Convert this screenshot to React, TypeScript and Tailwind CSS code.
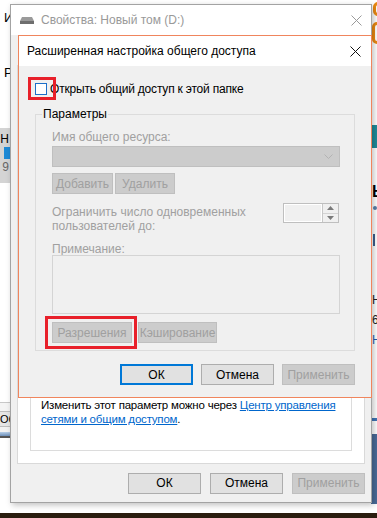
import React from 'react';

const font = "font-['Segoe_UI','Liberation_Sans',Arial,sans-serif]";

function WinButton({ label, w, disabled, primary }: { label: string; w: string; disabled?: boolean; primary?: boolean }) {
  return (
    <div
      className={[
        'h-[21px] flex items-center justify-center text-[12px] leading-none',
        w,
        disabled
          ? 'bg-[#cccccc] border border-[#bfbfbf] text-[#a0a0a0]'
          : primary
            ? 'bg-[#e1e1e1] border-2 border-[#0078d7] text-black'
            : 'bg-[#e1e1e1] border border-[#adadad] text-black',
      ].join(' ')}
    >
      {label}
    </div>
  );
}

function CloseX({ color }: { color: string }) {
  return (
    <svg width="11" height="11" viewBox="0 0 11 11">
      <path d="M0.5 0.5 L10.5 10.5 M10.5 0.5 L0.5 10.5" stroke={color} strokeWidth="1" />
    </svg>
  );
}

function Desktop() {
  return (
    <>
      {/* left strip of the window behind */}
      <div className="absolute left-[4px] top-[8px] text-[13px] text-black">И</div>
      <div className="absolute left-[4px] top-[63px] text-[13px] text-black">Р</div>
      <div className="absolute left-0 top-[128px] w-[10px] h-[55px] bg-[#d4d4d4] flex flex-col items-end pt-[4px] gap-[1px] text-[12px] leading-[14px]">
        <span className="text-black pr-[1px]">Н</span>
        <span className="w-[6px] h-[12px] bg-[#1e8ad6]" />
        <span className="text-[#666] pr-[1px]">9</span>
      </div>
      <div className="absolute left-0 top-[402px] w-[10px] h-[40px] flex flex-col">
        <div className="h-[9px] border-t border-[#c8c8c8] bg-[#f4f4f4]" />
        <div className="h-[16px] bg-[#e6e6e6] border-y border-[#bdbdbd] text-[11px] leading-[14px] text-black overflow-hidden">Обі</div>
        <div className="h-[5px] bg-[#f2f2f2]" />
        <div className="h-[4px] bg-gradient-to-b from-[#b7cfe9] to-[#6d8fb8]" />
        <div className="h-[2px] bg-[#555]" />
      </div>

      {/* right strip: wallpaper and another window */}
      <div className="absolute left-[372px] top-[0px] w-[5px] h-[60px] overflow-hidden">
        <div className="absolute left-[1px] top-[2px] w-[10px] h-[14px] rounded-full border-[3px] border-[#ec8a12]" />
        <div className="absolute left-[0px] top-[22px] w-[10px] h-[22px] rounded-full border-[3px] border-[#ec8a12]" />
      </div>
      <div className="absolute left-[372px] top-[125px] w-[5px] h-[23px] bg-[#1f8b99]" />
      <div className="absolute left-[372px] top-[184px] w-[5px] h-[18px] overflow-hidden text-[16px] leading-none font-bold text-black">Ь</div>
      <div className="absolute left-[373px] top-[206px] w-[4px] h-[4px] rounded-full bg-[#5a7fa8]" />
      <div className="absolute left-[373px] top-[234px] w-[2px] h-[12px] bg-[#3d5f8c]" />
      <div className="absolute left-[372px] top-[290px] w-[5px] overflow-hidden text-[12px] leading-[20px] text-[#222] flex flex-col">
        <span>Н</span>
        <span>6</span>
        <span className="text-[#1f5fb0]">Н</span>
      </div>
      <div className="absolute left-[371px] top-[418px] w-[6px] h-[3px] bg-[#3f74b5]" />
      <div className="absolute left-[371px] top-[434px] w-[6px] h-[70px] bg-[#4a6b98]" />

      {/* bottom dark strip */}
      <div className="absolute left-0 top-[513px] w-[377px] h-[5px] bg-[#2a1d0f]" />
    </>
  );
}

function PropertiesWindow() {
  return (
    <div className="absolute left-[10px] top-[4px] w-[362px] h-[499px] border border-[#a3a3a3] bg-[#f0f0f0] flex flex-col shadow-[2px_2px_6px_rgba(0,0,0,0.25)]">
      <div className="h-[30px] bg-white flex items-center pl-[9px] pr-[9px]">
        <svg width="14" height="8" viewBox="0 0 14 8" className="mt-[2px]">
          <path d="M2 0 H12 L14 4 V7 H0 V4 Z" fill="#9a9a9a" />
          <rect x="0" y="4" width="14" height="3" fill="#6e6e6e" />
        </svg>
        <span className="ml-[7px] text-[12px] text-[#999999]">Свойства: Новый том (D:)</span>
        <div className="ml-auto">
          <CloseX color="#9a9a9a" />
        </div>
      </div>
      <div className="flex-1 flex flex-col px-[6px] pt-[30px]">
        <div className="flex-1 bg-white border border-[#d9d9d9] px-[12px] pb-[12px] flex flex-col">
          <div className="flex-1 border border-[#dcdcdc] border-t-0 flex flex-col justify-end pl-[10px] pb-[24px] text-[11.5px] leading-[14px] text-black">
            <p className="whitespace-nowrap tracking-[-0.2px]">
              Изменить этот параметр можно через{' '}
              <span className="text-[#0066cc] underline">Центр управления</span>
              <br />
              <span className="text-[#0066cc] underline">сетями и общим доступом</span>.
            </p>
          </div>
        </div>
        <div className="h-[38px] flex items-center justify-end gap-[9px]">
          <WinButton label="ОК" w="w-[73px]" />
          <WinButton label="Отмена" w="w-[73px]" />
          <WinButton label="Применить" w="w-[73px]" disabled />
        </div>
      </div>
    </div>
  );
}

function Dialog() {
  return (
    <div className="absolute left-[18px] top-[35px] w-[354px] h-[363px] border border-[#f0855d] bg-[#f0f0f0] flex flex-col">
      <div className="h-[30px] bg-white flex items-center pl-[8px] pr-[10px]">
        <span className="text-[12px] text-black">Расширенная настройка общего доступа</span>
        <div className="ml-auto">
          <CloseX color="#111" />
        </div>
      </div>

      <div className="flex flex-col px-[16px]">
        <div className="relative flex items-center h-[12px] mt-[17px]">
          <span className="w-[12px] h-[12px] border border-[#1c6fc9] bg-white" />
          <span className="ml-[3px] text-[12px] leading-none text-black tracking-[-0.2px]">Открыть общий доступ к этой папке</span>
          <span className="absolute left-[-7px] top-[-6px] w-[28px] h-[23px] border-[3px] border-[#e8202a]" />
        </div>

        <div className="relative mt-[19px] w-[320px] h-[237px] border border-[#dcdcdc] pl-[16px] pr-[15px] flex flex-col text-[12px] leading-[14px] text-[#a0a0a0]">
          <span className="absolute left-[6px] top-[-8px] bg-[#f0f0f0] px-[1px] text-black">Параметры</span>
          <span className="mt-[15px]">Имя общего ресурса:</span>
          <div className="mt-[2px] h-[21px] w-[288px] bg-[#cccccc] border border-[#bfbfbf] flex items-center justify-end pr-[6px]">
            <svg width="9" height="5" viewBox="0 0 9 5">
              <path d="M0.5 0.5 L4.5 4.5 L8.5 0.5" stroke="#b3b3b3" fill="none" />
            </svg>
          </div>
          <div className="mt-[6px] flex gap-[2px]">
            <WinButton label="Добавить" w="w-[61px]" disabled />
            <WinButton label="Удалить" w="w-[60px]" disabled />
          </div>
          <div className="mt-[9px] flex justify-between">
            <span className="w-[200px] mt-[2px]">Ограничить число одновременных пользователей до:</span>
            <div className="w-[56px] h-[20px] border border-[#bfbfbf] bg-[#f0f0f0] flex">
              <div className="flex-1 border border-white" />
              <div className="w-[16px] flex flex-col border-l border-[#c8c8c8]">
                <div className="flex-1 flex items-center justify-center border-b border-[#d4d4d4]">
                  <svg width="7" height="4" viewBox="0 0 7 4"><path d="M3.5 0 L7 4 H0 Z" fill="#7a7a7a" /></svg>
                </div>
                <div className="flex-1 flex items-center justify-center">
                  <svg width="7" height="4" viewBox="0 0 7 4"><path d="M0 0 H7 L3.5 4 Z" fill="#7a7a7a" /></svg>
                </div>
              </div>
            </div>
          </div>
          <span className="mt-[9px]">Примечание:</span>
          <div className="mt-[-1px] h-[59px] w-[288px] border border-[#d4d4d4] bg-[#f0f0f0]" />
          <div className="relative mt-[8px] flex gap-[6px]">
            <WinButton label="Разрешения" w="w-[80px]" disabled />
            <WinButton label="Кэширование" w="w-[79px]" disabled />
            <span className="absolute left-[-7px] top-[-6px] w-[92px] h-[33px] border-[3px] border-[#e8202a]" />
          </div>
        </div>
      </div>

      <div className="flex justify-end gap-[8px] pr-[16px] mt-[13px]">
        <WinButton label="ОК" w="w-[73px]" primary />
        <WinButton label="Отмена" w="w-[73px]" />
        <WinButton label="Применить" w="w-[73px]" disabled />
      </div>
    </div>
  );
}

export default function App() {
  return (
    <div className={`relative w-[377px] h-[518px] overflow-hidden bg-white ${font}`}>
      <Desktop />
      <PropertiesWindow />
      <Dialog />
    </div>
  );
}
